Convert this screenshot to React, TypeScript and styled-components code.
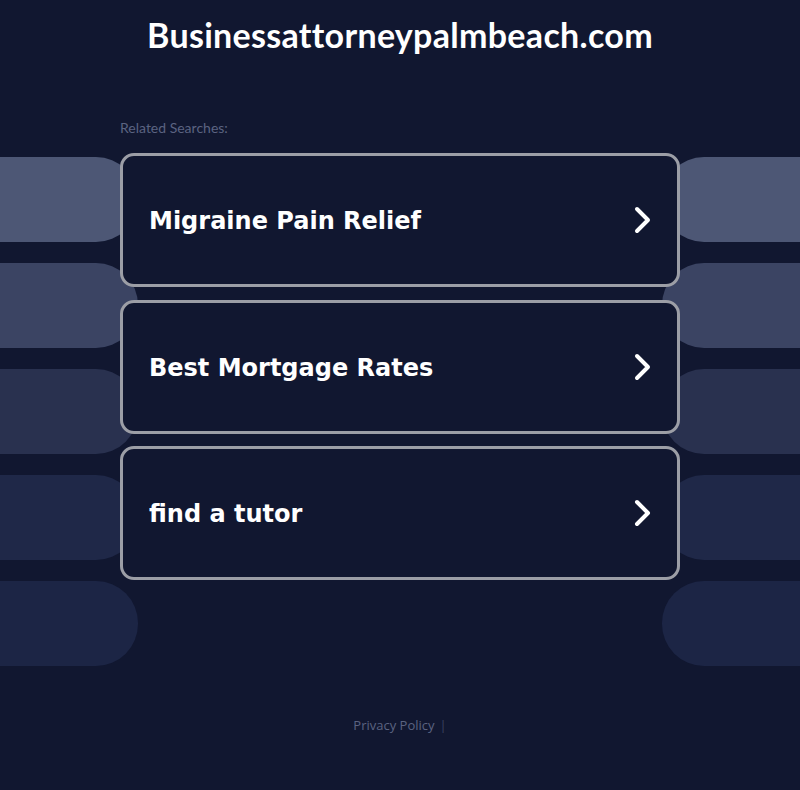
import React from 'react';
import styled, { createGlobalStyle } from 'styled-components';

const GlobalStyle = createGlobalStyle`
  html, body {
    margin: 0;
    padding: 0;
    background: #111730;
  }
  * {
    box-sizing: border-box;
  }
`;

const pillColors = ['#4d5775', '#3b4463', '#29314f', '#1f2848', '#1c2545'];

const searches = ['Migraine Pain Relief', 'Best Mortgage Rates', 'find a tutor'];

const Page = styled.div`
  position: relative;
  min-height: 790px;
  overflow: hidden;
  font-family: 'DejaVu Sans', Verdana, sans-serif;
`;

// decorative pills sitting behind the cards
const Decor = styled.div`
  position: absolute;
  top: 157px;
  left: 0;
  right: 0;
  display: flex;
  justify-content: space-between;
  pointer-events: none;
`;

const PillColumn = styled.div`
  display: flex;
  flex-direction: column;
  gap: 21px;
`;

const Pill = styled.div<{ side: 'left' | 'right'; color: string }>`
  width: 138px;
  height: 85px;
  background: ${({ color }) => color};
  border-radius: ${({ side }) => (side === 'left' ? '0 42px 42px 0' : '42px 0 0 42px')};
`;

const Content = styled.div`
  position: relative;
  width: 560px;
  margin: 0 auto;
  display: flex;
  flex-direction: column;
`;

const Title = styled.h1`
  margin: 0;
  padding-top: 13px;
  height: 120px;
  text-align: center;
  color: #ffffff;
  font-family: 'Lato', 'Open Sans', sans-serif;
  font-weight: 700;
  font-size: 34px;
  line-height: 44px;
  letter-spacing: 0.3px;
`;

const Label = styled.div`
  color: #5b6381;
  font-family: 'Lato', 'Open Sans', sans-serif;
  font-size: 14px;
  line-height: 16px;
  height: 33px;
`;

const CardList = styled.div`
  display: flex;
  flex-direction: column;
  gap: 12.5px;
`;

const Card = styled.a`
  display: flex;
  align-items: center;
  justify-content: space-between;
  height: 134px;
  padding: 0 24px 0 26px;
  border: 3px solid #9c9ea6;
  border-radius: 14px;
  background: #111730;
  color: #ffffff;
  text-decoration: none;
`;

const CardText = styled.span`
  font-family: 'DejaVu Sans', Verdana, sans-serif;
  font-weight: 700;
  font-size: 24px;
  padding-top: 2px;
`;

const Footer = styled.div`
  margin-top: 136px;
  text-align: center;
  font-family: 'Open Sans', 'Lato', sans-serif;
  font-size: 13px;
  color: #5b6381;
`;

const Sep = styled.span`
  color: #3a4160;
  margin-left: 5px;
`;

const Chevron = () => (
  <svg width="20" height="30" viewBox="0 0 20 30" fill="none">
    <path d="M4 4 L15 15 L4 26" stroke="#ffffff" strokeWidth="4" strokeLinecap="round" strokeLinejoin="round" />
  </svg>
);

export default function App() {
  return (
    <Page>
      <GlobalStyle />
      <Decor>
        <PillColumn>
          {pillColors.map((c, i) => (
            <Pill key={i} side="left" color={c} />
          ))}
        </PillColumn>
        <PillColumn>
          {pillColors.map((c, i) => (
            <Pill key={i} side="right" color={c} />
          ))}
        </PillColumn>
      </Decor>
      <Title>Businessattorneypalmbeach.com</Title>
      <Content>
        <Label>Related Searches:</Label>
        <CardList>
          {searches.map((s) => (
            <Card key={s} href="#">
              <CardText>{s}</CardText>
              <Chevron />
            </Card>
          ))}
        </CardList>
        <Footer>
          Privacy Policy<Sep>|</Sep>
        </Footer>
      </Content>
    </Page>
  );
}
